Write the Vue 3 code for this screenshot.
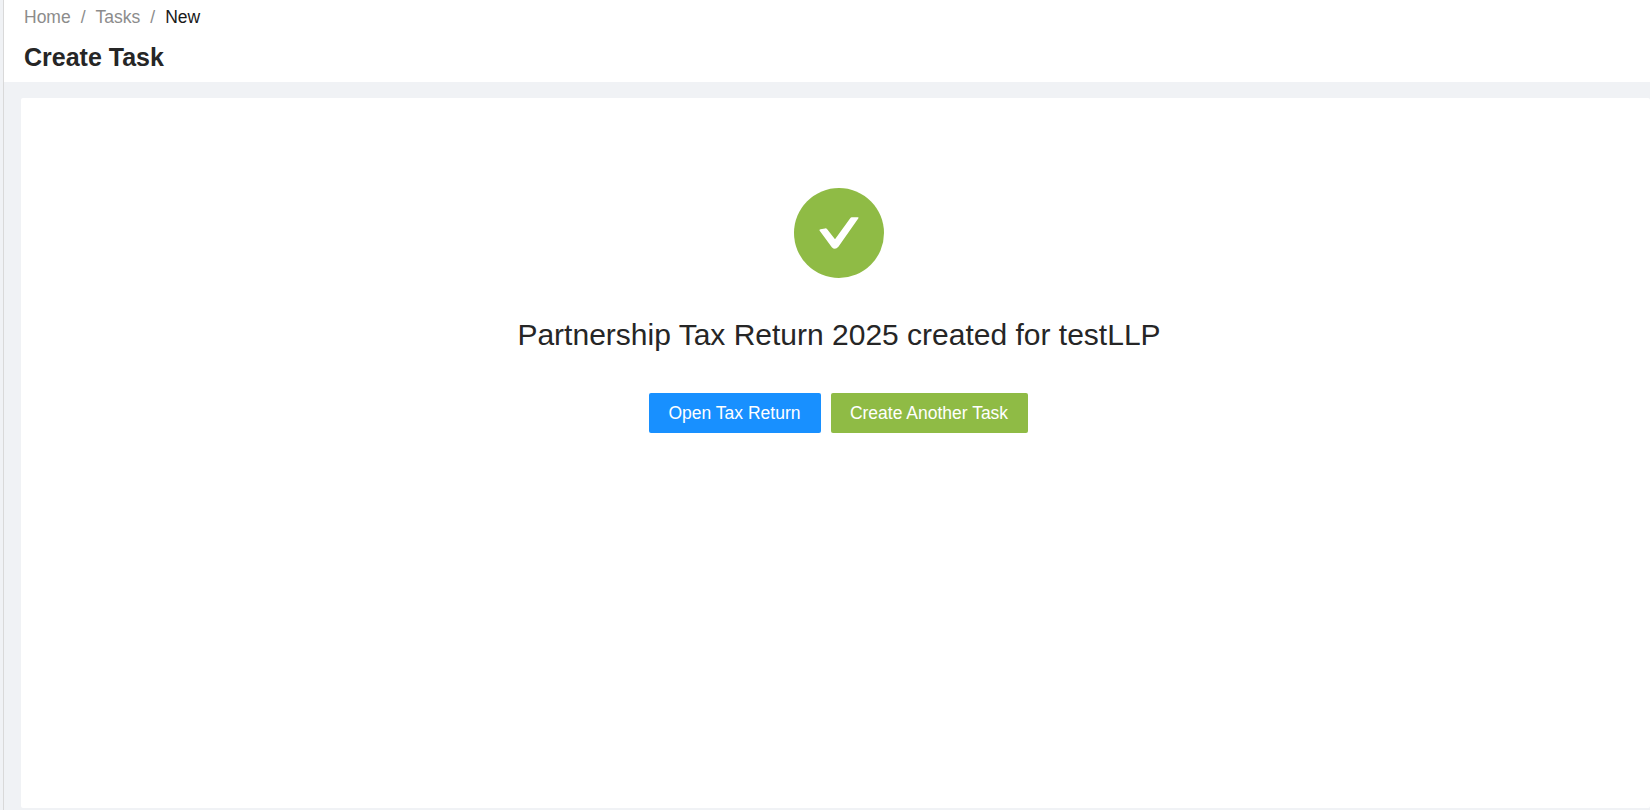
<template>
  <div class="page">
    <div class="rail"></div>
    <div class="main">
      <header class="page-header">
        <nav class="breadcrumb" aria-label="Breadcrumb">
          <span class="crumb">Home</span>
          <span class="sep">/</span>
          <span class="crumb">Tasks</span>
          <span class="sep">/</span>
          <span class="crumb current">New</span>
        </nav>
        <h1 class="page-title">Create Task</h1>
      </header>

      <div class="content">
        <section class="card">
          <div class="success-icon">
            <svg viewBox="0 0 90 90" width="90" height="90" aria-hidden="true">
              <circle cx="45" cy="45" r="45" fill="#8fbb45" />
              <path d="M25.5 42.5 Q25 41.5 26.5 41.2 L31 40.4 Q32.4 40.2 33.2 41.2 L41 51.2 L56.4 29.9 Q56.9 29.3 57.8 29.3 L63.8 29.3 Q65 29.3 64.4 30.3 L44.4 58.8 Q41 62.6 37.8 59.2 Z" fill="#fff" />
            </svg>
          </div>
          <p class="message">Partnership Tax Return 2025 created for testLLP</p>
          <div class="actions">
            <button class="btn btn-primary" type="button">Open Tax Return</button>
            <button class="btn btn-success" type="button">Create Another Task</button>
          </div>
        </section>
      </div>
    </div>
  </div>
</template>

<script setup>
</script>

<style>
html,
body {
  margin: 0;
  overflow: hidden;
}
</style>

<style scoped>
.page {
  display: flex;
  height: 810px;
  background: #f0f2f5;
  font-family: "Liberation Sans", Arial, sans-serif;
}

.rail {
  width: 3px;
  flex-shrink: 0;
  border-right: 1px solid #d9d9d9;
}

.main {
  flex: 1;
  display: flex;
  flex-direction: column;
  min-width: 0;
}

.page-header {
  height: 82px;
  box-sizing: border-box;
  background: #fff;
  padding: 6px 20px 0;
}

.breadcrumb {
  display: flex;
  font-size: 17.5px;
  line-height: 22px;
  color: #8c8c8c;
}

.sep {
  margin: 0 10px;
}

.sep:first-of-type {
  margin-right: 19px;
}

.current {
  color: #1a1a1a;
}

.page-title {
  margin: 14px 0 0;
  font-size: 25px;
  line-height: 30px;
  font-weight: 700;
  color: #262626;
}

.content {
  flex: 1;
  padding: 16px 0 2px 17px;
  display: flex;
  min-height: 0;
}

.card {
  flex: 1;
  background: #fff;
  border-radius: 2px;
  padding: 90px 0 0 7px;
  display: flex;
  flex-direction: column;
  align-items: center;
}

.success-icon {
  width: 90px;
  height: 90px;
}

.message {
  margin: 37px 0 0;
  font-size: 30px;
  line-height: 40px;
  color: #262626;
}

.actions {
  display: flex;
  gap: 10px;
  margin: 38px 2px 0 0;
}

.btn {
  width: 172px;
  height: 40px;
  padding: 0;
  border: none;
  border-radius: 2px;
  color: #fff;
  font-family: inherit;
  font-size: 17.5px;
  cursor: pointer;
}

.btn-primary {
  background: #1890ff;
}

.btn-success {
  width: 197px;
  background: #8fbb45;
}
</style>
